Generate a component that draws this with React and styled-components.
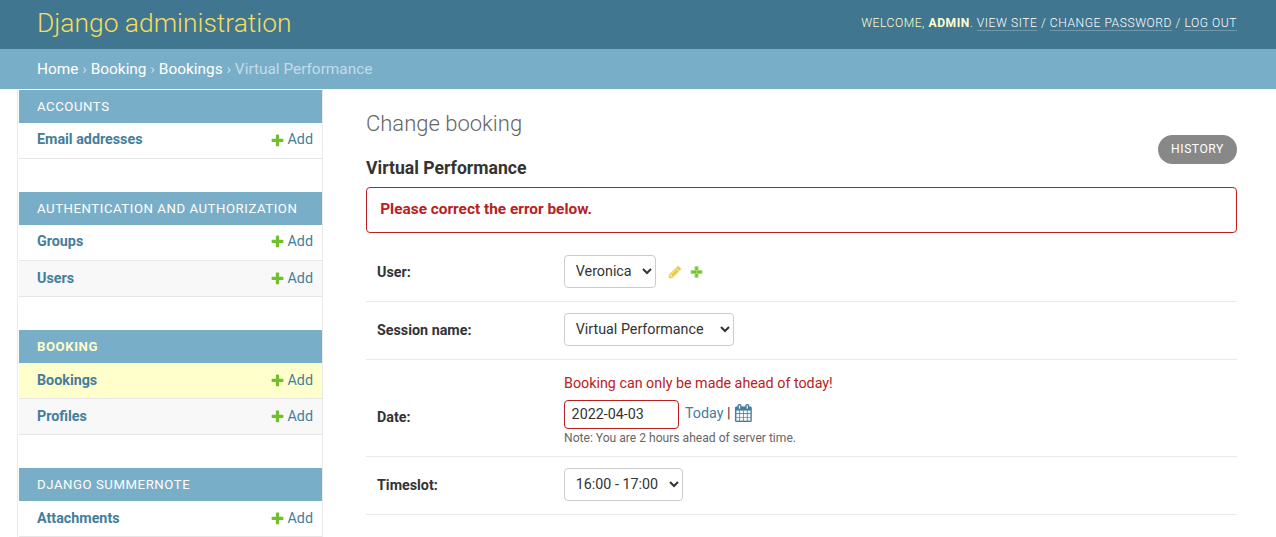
import React from "react";
import styled, { createGlobalStyle, css } from "styled-components";

const Global = createGlobalStyle`
  *, *::before, *::after { box-sizing: border-box; }
  html, body { margin: 0; padding: 0; height: 537px; overflow: hidden; background: #fff; }
  body { color: #333; font: 14.3px Roboto, "Liberation Sans", Arial, sans-serif; }
  a { color: inherit; text-decoration: none; }
`;

const Page = styled.div`
  height: 537px;
  overflow: hidden;
  display: flex;
  flex-direction: column;
`;

const Header = styled.header`
  flex: none;
  display: flex;
  justify-content: space-between;
  height: 49px;
  padding: 0 39px 0 37px;
  background: #417690;
`;

const SiteName = styled.h1`
  margin: 0;
  font-size: 26.4px;
  font-weight: 300;
  line-height: 46px;
  color: #f5dd5d;
`;

const UserTools = styled.div`
  padding-top: 16px;
  font-size: 12.1px;
  font-weight: 300;
  line-height: 15px;
  letter-spacing: 0.55px;
  text-transform: uppercase;
  color: #ffc;
  strong { font-weight: 700; }
`;

const ToolLink = styled.a`
  color: #fff;
  border-bottom: 1px solid rgba(255, 255, 255, 0.25);
`;

const Breadcrumbs = styled.nav`
  flex: none;
  height: 40px;
  padding-left: 37px;
  background: #79aec8;
  color: #c4dce8;
  font-size: 15.4px;
  line-height: 40px;
  a { color: #fff; }
`;

const Body = styled.div`
  display: flex;
  flex: 1;
  min-height: 0;
`;

const Sidebar = styled.aside`
  flex: none;
  width: 306px;
  margin-left: 17px;
  padding: 1px 0 0 1px;
  border: solid #eaeaea;
  border-width: 0 1px;
`;

const Module = styled.section`
  margin-bottom: 33px;
`;

const Caption = styled.h2`
  margin: 0;
  height: 33px;
  padding-left: 18px;
  background: #79aec8;
  color: ${(p) => (p.$current ? "#ffc" : "#fff")};
  font-size: 13.2px;
  font-weight: ${(p) => (p.$current ? 700 : 400)};
  line-height: 33px;
  letter-spacing: 0.55px;
  text-transform: uppercase;
`;

const ModelRow = styled.div`
  display: flex;
  justify-content: space-between;
  height: 36px;
  padding: ${(p) => p.$top}px 9px 0 18px;
  border-bottom: 1px solid #e6e6e6;
  background: ${(p) => (p.$current ? "#ffc" : p.$alt ? "#f8f8f8" : "#fff")};
  color: #447e9b;
  line-height: 17px;
`;

const ModelLink = styled.a`
  font-weight: 700;
`;

const AddLink = styled.a`
  display: flex;
  gap: 2.6px;
  svg { margin-top: ${(p) => p.$iconTop}px; }
`;

const Content = styled.main`
  flex: 1;
  padding: 0 39px 0 43px;
`;

const Heading = styled.div`
  display: flex;
  justify-content: space-between;
  height: 98px;
`;

const PageTitle = styled.h1`
  margin: 0;
  padding-top: 21px;
  color: #666;
  font-size: 22px;
  font-weight: 300;
  line-height: 27px;
`;

const ObjectTitle = styled.h2`
  margin: 18px 0 0;
  font-size: 17.6px;
  font-weight: 700;
  line-height: 26px;
`;

const HistoryButton = styled.a`
  margin-top: 46px;
  width: 79px;
  height: 29px;
  border-radius: 16px;
  background: #888;
  color: #fff;
  font-size: 12.1px;
  line-height: 28px;
  letter-spacing: 0.55px;
  text-align: center;
  text-transform: uppercase;
`;

const ErrorNote = styled.p`
  margin: 0 0 10px;
  height: 46px;
  padding-left: 13.2px;
  border: 1px solid #ba2121;
  border-radius: 4px;
  color: #ba2121;
  font-size: 15.4px;
  font-weight: 700;
  line-height: 43px;
`;

const FormRow = styled.div`
  display: flex;
  height: ${(p) => p.$h}px;
  padding: ${(p) => p.$top}px 0 0 11px;
  border-bottom: 1px solid #eaeaea;
`;

const Label = styled.label`
  width: 187px;
  padding-top: ${(p) => p.$top}px;
  font-weight: 700;
  line-height: 18px;
`;

const control = css`
  margin: 0;
  border: 1px solid #ccc;
  border-radius: 4px;
  background: #fff;
  color: #333;
  font-family: inherit;
  font-size: 14.3px;
`;

const Select = styled.select`
  ${control}
  width: ${(p) => p.$w}px;
  height: 33px;
  padding: 0 0 2px 6.75px;
`;

const RelatedLinks = styled.span`
  display: flex;
  gap: 8px;
  padding: 10px 0 0 12px;
`;

const DateField = styled.div`
  line-height: 17px;
`;

const FieldError = styled.div`
  color: #ba2121;
  margin-bottom: 8px;
`;

const DateLine = styled.div`
  display: flex;
  height: 29px;
`;

const DateInput = styled.input`
  ${control}
  width: 115px;
  height: 29px;
  padding: 0 6px 2px 6.6px;
  border-color: #ba2121;
`;

const Shortcuts = styled.span`
  display: flex;
  gap: 3.6px;
  padding: 5px 0 0 6px;
  a { color: #447e9b; }
  svg { margin-top: -1px; }
`;

const Note = styled.div`
  margin-top: 1px;
  color: #666;
  font-size: 12.1px;
  line-height: 16px;
`;

const PlusIcon = () => (
  <svg width="15" height="15" viewBox="0 0 1792 1792">
    <path fill="#70bf2b" d="M1600 796v192q0 40-28 68t-68 28h-416v416q0 40-28 68t-68 28h-192q-40 0-68-28t-28-68v-416h-416q-40 0-68-28t-28-68v-192q0-40 28-68t68-28h416v-416q0-40 28-68t68-28h192q40 0 68 28t28 68v416h416q40 0 68 28t28 68z" />
  </svg>
);

const SoftPlusIcon = () => (
  <svg width="14" height="14" viewBox="0 0 14 14">
    <path fill="#a9dd7c" d="M4.5 1h4v4h4v4h-4v4h-4V9h-4V5h4z" />
    <path fill="#6fc42c" d="M5.5 2h2v4h4v2h-4v4h-2V8h-4V6h4z" />
    <path fill="#9bdc62" d="M6 5h1v4H6z" />
  </svg>
);

const PencilIcon = () => (
  <svg width="14" height="14" viewBox="0 0 1792 1792">
    <path fill="#e8cc40" stroke="#f1dc76" strokeWidth="90" strokeLinejoin="round" d="M491 1536l91-91-235-235-91 91v107h128v128h107zm523-928q0-22-22-22-10 0-17 7l-542 542q-7 7-7 17 0 22 22 22 10 0 17-7l542-542q7-7 7-17zm-54-192l416 416-832 832h-416v-416zm683 96q0 53-37 90l-166 166-416-416 166-165q36-38 90-38 53 0 91 38l235 234q37 39 37 91z" />
  </svg>
);

const CalendarIcon = () => (
  <svg width="18" height="18" viewBox="-40 0 1792 1792">
    <path fill="#447e9b" stroke="#447e9b" strokeWidth="16" d="M192 1664h288v-288h-288v288zm352 0h320v-288h-320v288zm-352-352h288v-320h-288v320zm352 0h320v-320h-320v320zm-352-384h288v-288h-288v288zm736 736h320v-288h-320v288zm-384-736h320v-288h-320v288zm768 736h288v-288h-288v288zm-384-352h320v-320h-320v320zm-352-864v-288q0-13-9.5-22.5t-22.5-9.5h-64q-13 0-22.5 9.5t-9.5 22.5v288q0 13 9.5 22.5t22.5 9.5h64q13 0 22.5-9.5t9.5-22.5zm736 864h288v-320h-288v320zm-384-384h320v-288h-320v288zm384 0h288v-288h-288v288zm32-480v-288q0-13-9.5-22.5t-22.5-9.5h-64q-13 0-22.5 9.5t-9.5 22.5v288q0 13 9.5 22.5t22.5 9.5h64q13 0 22.5-9.5t9.5-22.5zm384-64v1280q0 52-38 90t-90 38h-1408q-52 0-90-38t-38-90v-1280q0-52 38-90t90-38h128v-96q0-66 47-113t113-47h64q66 0 113 47t47 113v96h384v-96q0-66 47-113t113-47h64q66 0 113 47t47 113v96h128q52 0 90 38t38 90z" />
  </svg>
);

const apps = [
  { name: "Accounts", models: [{ name: "Email addresses", top: 8, iconTop: 1.6 }] },
  {
    name: "Authentication and Authorization",
    models: [{ name: "Groups", top: 8 }, { name: "Users", top: 9 }],
  },
  {
    name: "Booking",
    current: true,
    models: [{ name: "Bookings", top: 9, current: true }, { name: "Profiles", top: 9 }],
  },
  { name: "Django Summernote", models: [{ name: "Attachments", top: 9 }] },
];

export default function App() {
  return (
    <Page>
      <Global />
      <Header>
        <SiteName>Django administration</SiteName>
        <UserTools>
          Welcome, <strong>admin</strong>. <ToolLink>View site</ToolLink> / <ToolLink>Change password</ToolLink> / <ToolLink>Log out</ToolLink>
        </UserTools>
      </Header>
      <Breadcrumbs>
        <a>Home</a> › <a>Booking</a> › <a>Bookings</a> › Virtual Performance
      </Breadcrumbs>
      <Body>
        <Sidebar>
          {apps.map((app) => (
            <Module key={app.name}>
              <Caption $current={app.current}>{app.name}</Caption>
              {app.models.map((m, i) => (
                <ModelRow key={m.name} $top={m.top} $alt={i % 2 === 1} $current={m.current}>
                  <ModelLink>{m.name}</ModelLink>
                  <AddLink $iconTop={m.iconTop ?? 0.6}><PlusIcon />Add</AddLink>
                </ModelRow>
              ))}
            </Module>
          ))}
        </Sidebar>
        <Content>
          <Heading>
            <div>
              <PageTitle>Change booking</PageTitle>
              <ObjectTitle>Virtual Performance</ObjectTitle>
            </div>
            <HistoryButton>History</HistoryButton>
          </Heading>
          <ErrorNote>Please correct the error below.</ErrorNote>
          <FormRow $h={59} $top={12}>
            <Label $top={8}>User:</Label>
            <Select $w={92}><option>Veronica</option></Select>
            <RelatedLinks><PencilIcon /><SoftPlusIcon /></RelatedLinks>
          </FormRow>
          <FormRow $h={58} $top={11}>
            <Label $top={8}>Session name:</Label>
            <Select $w={170}><option>Virtual Performance</option></Select>
          </FormRow>
          <FormRow $h={97} $top={15}>
            <Label $top={33}>Date:</Label>
            <DateField>
              <FieldError>Booking can only be made ahead of today!</FieldError>
              <DateLine>
                <DateInput defaultValue="2022-04-03" />
                <Shortcuts><a>Today</a><span>|</span><CalendarIcon /></Shortcuts>
              </DateLine>
              <Note>Note: You are 2 hours ahead of server time.</Note>
            </DateField>
          </FormRow>
          <FormRow $h={58} $top={11}>
            <Label $top={8}>Timeslot:</Label>
            <Select $w={119}><option>16:00 - 17:00</option></Select>
          </FormRow>
        </Content>
      </Body>
    </Page>
  );
}
